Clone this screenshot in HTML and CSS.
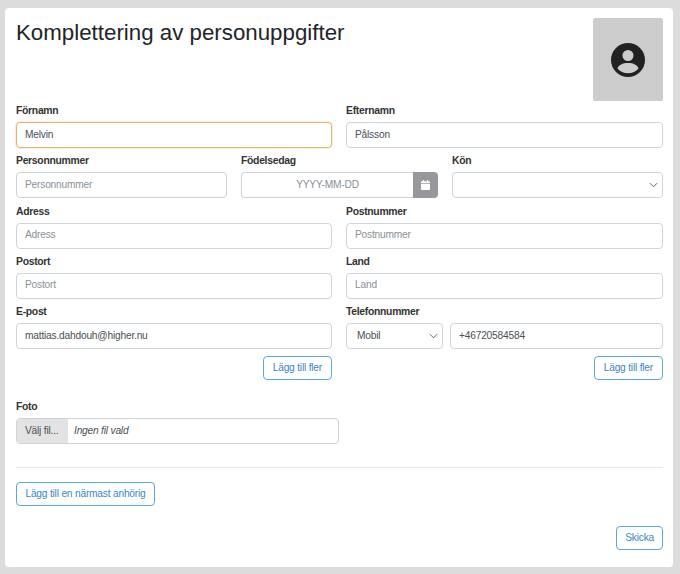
FILE: index.html
```html
<!DOCTYPE html>
<html lang="sv">
<head>
    <meta charset="UTF-8">
    <title>Komplettering av personuppgifter</title>
    <link rel="stylesheet" href="styles.css">
</head>
<body>
    <div class="card">
        <div class="head">
            <h1 class="title">Komplettering av personuppgifter</h1>
            <div class="photo">
                <svg class="photo-icon" viewBox="0 0 34 34">
                    <circle cx="17" cy="17" r="17" fill="#212121"/>
                    <circle cx="17" cy="12.5" r="5.5" fill="#ccc"/>
                    <path d="M6.5 25.5c1.2-3.6 5-5.5 10.5-5.5s9.300 1.900 10.500 5.500c-2.400 3-6.200 4.700-10.500 4.700s-8.100-1.700-10.500-4.700z" fill="#ccc"/>
                </svg>
            </div>
        </div>

        <div class="row">
            <div class="field">
                <label class="label">Förnamn</label>
                <input class="input focused" type="text" value="Melvin">
            </div>
            <div class="field">
                <label class="label">Efternamn</label>
                <input class="input" type="text" value="Pålsson">
            </div>
        </div>

        <div class="row row-three">
            <div class="field">
                <label class="label">Personnummer</label>
                <input class="input" type="text" placeholder="Personnummer">
            </div>
            <div class="field">
                <label class="label">Födelsedag</label>
                <div class="date">
                    <input class="input date-input" type="text" placeholder="YYYY-MM-DD">
                    <span class="date-btn">
                        <svg class="date-icon" viewBox="0 0 10 11">
                            <path d="M2 0h1.300v1.300h3.400V0H8v1.300h1a1 1 0 0 1 1 1V3.500H0V2.300a1 1 0 0 1 1-1h1zM0 4.300h10V10a1 1 0 0 1-1 1H1a1 1 0 0 1-1-1z" fill="#fff"/>
                        </svg>
                    </span>
                </div>
            </div>
            <div class="field">
                <label class="label">Kön</label>
                <select class="input select"><option></option></select>
            </div>
        </div>

        <div class="row">
            <div class="field">
                <label class="label">Adress</label>
                <input class="input" type="text" placeholder="Adress">
            </div>
            <div class="field">
                <label class="label">Postnummer</label>
                <input class="input" type="text" placeholder="Postnummer">
            </div>
        </div>

        <div class="row">
            <div class="field">
                <label class="label">Postort</label>
                <input class="input" type="text" placeholder="Postort">
            </div>
            <div class="field">
                <label class="label">Land</label>
                <input class="input" type="text" placeholder="Land">
            </div>
        </div>

        <div class="row">
            <div class="field">
                <label class="label">E-post</label>
                <input class="input" type="text" value="mattias.dahdouh@higher.nu">
                <div class="more">
                    <button class="btn" type="button">Lägg till fler</button>
                </div>
            </div>
            <div class="field">
                <label class="label">Telefonnummer</label>
                <div class="phone">
                    <select class="input select phone-type"><option>Mobil</option></select>
                    <input class="input" type="text" value="+46720584584">
                </div>
                <div class="more">
                    <button class="btn" type="button">Lägg till fler</button>
                </div>
            </div>
        </div>

        <div class="foto">
            <label class="label">Foto</label>
            <div class="file">
                <span class="file-btn">Välj fil...</span>
                <span class="file-name">Ingen fil vald</span>
            </div>
        </div>

        <hr class="divider">

        <button class="btn btn-relative" type="button">Lägg till en närmast anhörig</button>

        <div class="send">
            <button class="btn" type="button">Skicka</button>
        </div>
    </div>
</body>
</html>
```

FILE: styles.css
```css
*{
    box-sizing: border-box;
}
html, body{
    height: 100%;
}
body{
    margin: 0;
    padding: 8px 7px 7px 5px;
    background-color: #dcdcdc;
    font-family: "Liberation Sans", Arial, sans-serif;
    font-size: 12px;
    color: #212529;
}
.card{
    height: 559px;
    padding: 10px 10px 0 11px;
    background-color: #fff;
    border-radius: 4px;
}
.head{
    display: flex;
    justify-content: space-between;
    height: 86px;
}
.title{
    margin: 0;
    font-size: 22.3px;
    font-weight: 400;
    line-height: 30px;
}
.photo{
    display: flex;
    align-items: center;
    justify-content: center;
    width: 70px;
    height: 83px;
    background-color: #ccc;
    border-radius: 2px;
}
.photo-icon{
    width: 34px;
    height: 34px;
}
.row{
    display: grid;
    grid-template-columns: 316px 1fr;
    column-gap: 14px;
    margin-bottom: 6.25px;
}
.row-three{
    grid-template-columns: 211px 197px 211px;
}
.field{
    min-width: 0;
}
.label{
    display: block;
    height: 18px;
    font-weight: 700;
    font-size: 10.4px;
    letter-spacing: -.3px;
    line-height: 14px;
    color: #333;
}
.input{
    display: block;
    width: 100%;
    height: 26px;
    padding: 0 8px 2px;
    border: 1px solid #ced4da;
    border-radius: 4px;
    background-color: #fff;
    font-family: inherit;
    font-size: 10.2px;
    letter-spacing: -.2px;
    color: #495057;
}
.input::placeholder{
    color: #8a9198;
}
.focused{
    border-color: #eeb26f;
    box-shadow: 0 0 0 1px rgba(238, 178, 111, .25);
}
.select{
    appearance: none;
    background-image: url("data:image/svg+xml,%3Csvg xmlns='http://www.w3.org/2000/svg' viewBox='0 0 10 6'%3E%3Cpath d='M1 1l4 4 4-4' fill='none' stroke='%23666' stroke-width='1.100'/%3E%3C/svg%3E");
    background-repeat: no-repeat;
    background-position: right 4px center;
    background-size: 9px 6px;
}
.date{
    display: flex;
}
.date-input{
    flex: 1;
    min-width: 0;
    border-right: 0;
    border-radius: 4px 0 0 4px;
    text-align: center;
}
.date-btn{
    display: flex;
    align-items: center;
    justify-content: center;
    width: 25px;
    height: 26px;
    background-color: #98979c;
    border-radius: 0 4px 4px 0;
}
.date-icon{
    width: 9px;
    height: 10px;
}
.phone{
    display: grid;
    grid-template-columns: 97px 1fr;
    column-gap: 7px;
}
.phone-type{
    padding-left: 10px;
}
.more{
    display: flex;
    justify-content: flex-end;
    margin-top: 7px;
}
.more .btn{
    padding: 0 9px 2px;
}
.btn{
    height: 24px;
    padding: 0 8px 2px;
    border: 1px solid #5aa9e0;
    border-radius: 4px;
    background-color: #fff;
    font-family: inherit;
    font-size: 10.2px;
    letter-spacing: -.2px;
    color: #3a87c8;
    white-space: nowrap;
}
.foto{
    margin-top: 20px;
}
.file{
    display: flex;
    width: 323px;
    height: 26px;
    border: 1px solid #ced4da;
    border-radius: 4px;
    overflow: hidden;
    font-size: 10.2px;
    letter-spacing: -.2px;
    line-height: 23px;
}
.file-btn{
    width: 51px;
    padding-left: 8px;
    background-color: #e3e3e3;
    color: #495057;
}
.file-name{
    padding-left: 6px;
    font-style: italic;
    color: #495057;
}
.divider{
    margin: 23px 0 14px;
    border: 0;
    border-top: 1px solid #e8e8e8;
}
.btn-relative{
    display: block;
    width: 139px;
}
.send{
    display: flex;
    justify-content: flex-end;
    margin-top: 20px;
}
```
